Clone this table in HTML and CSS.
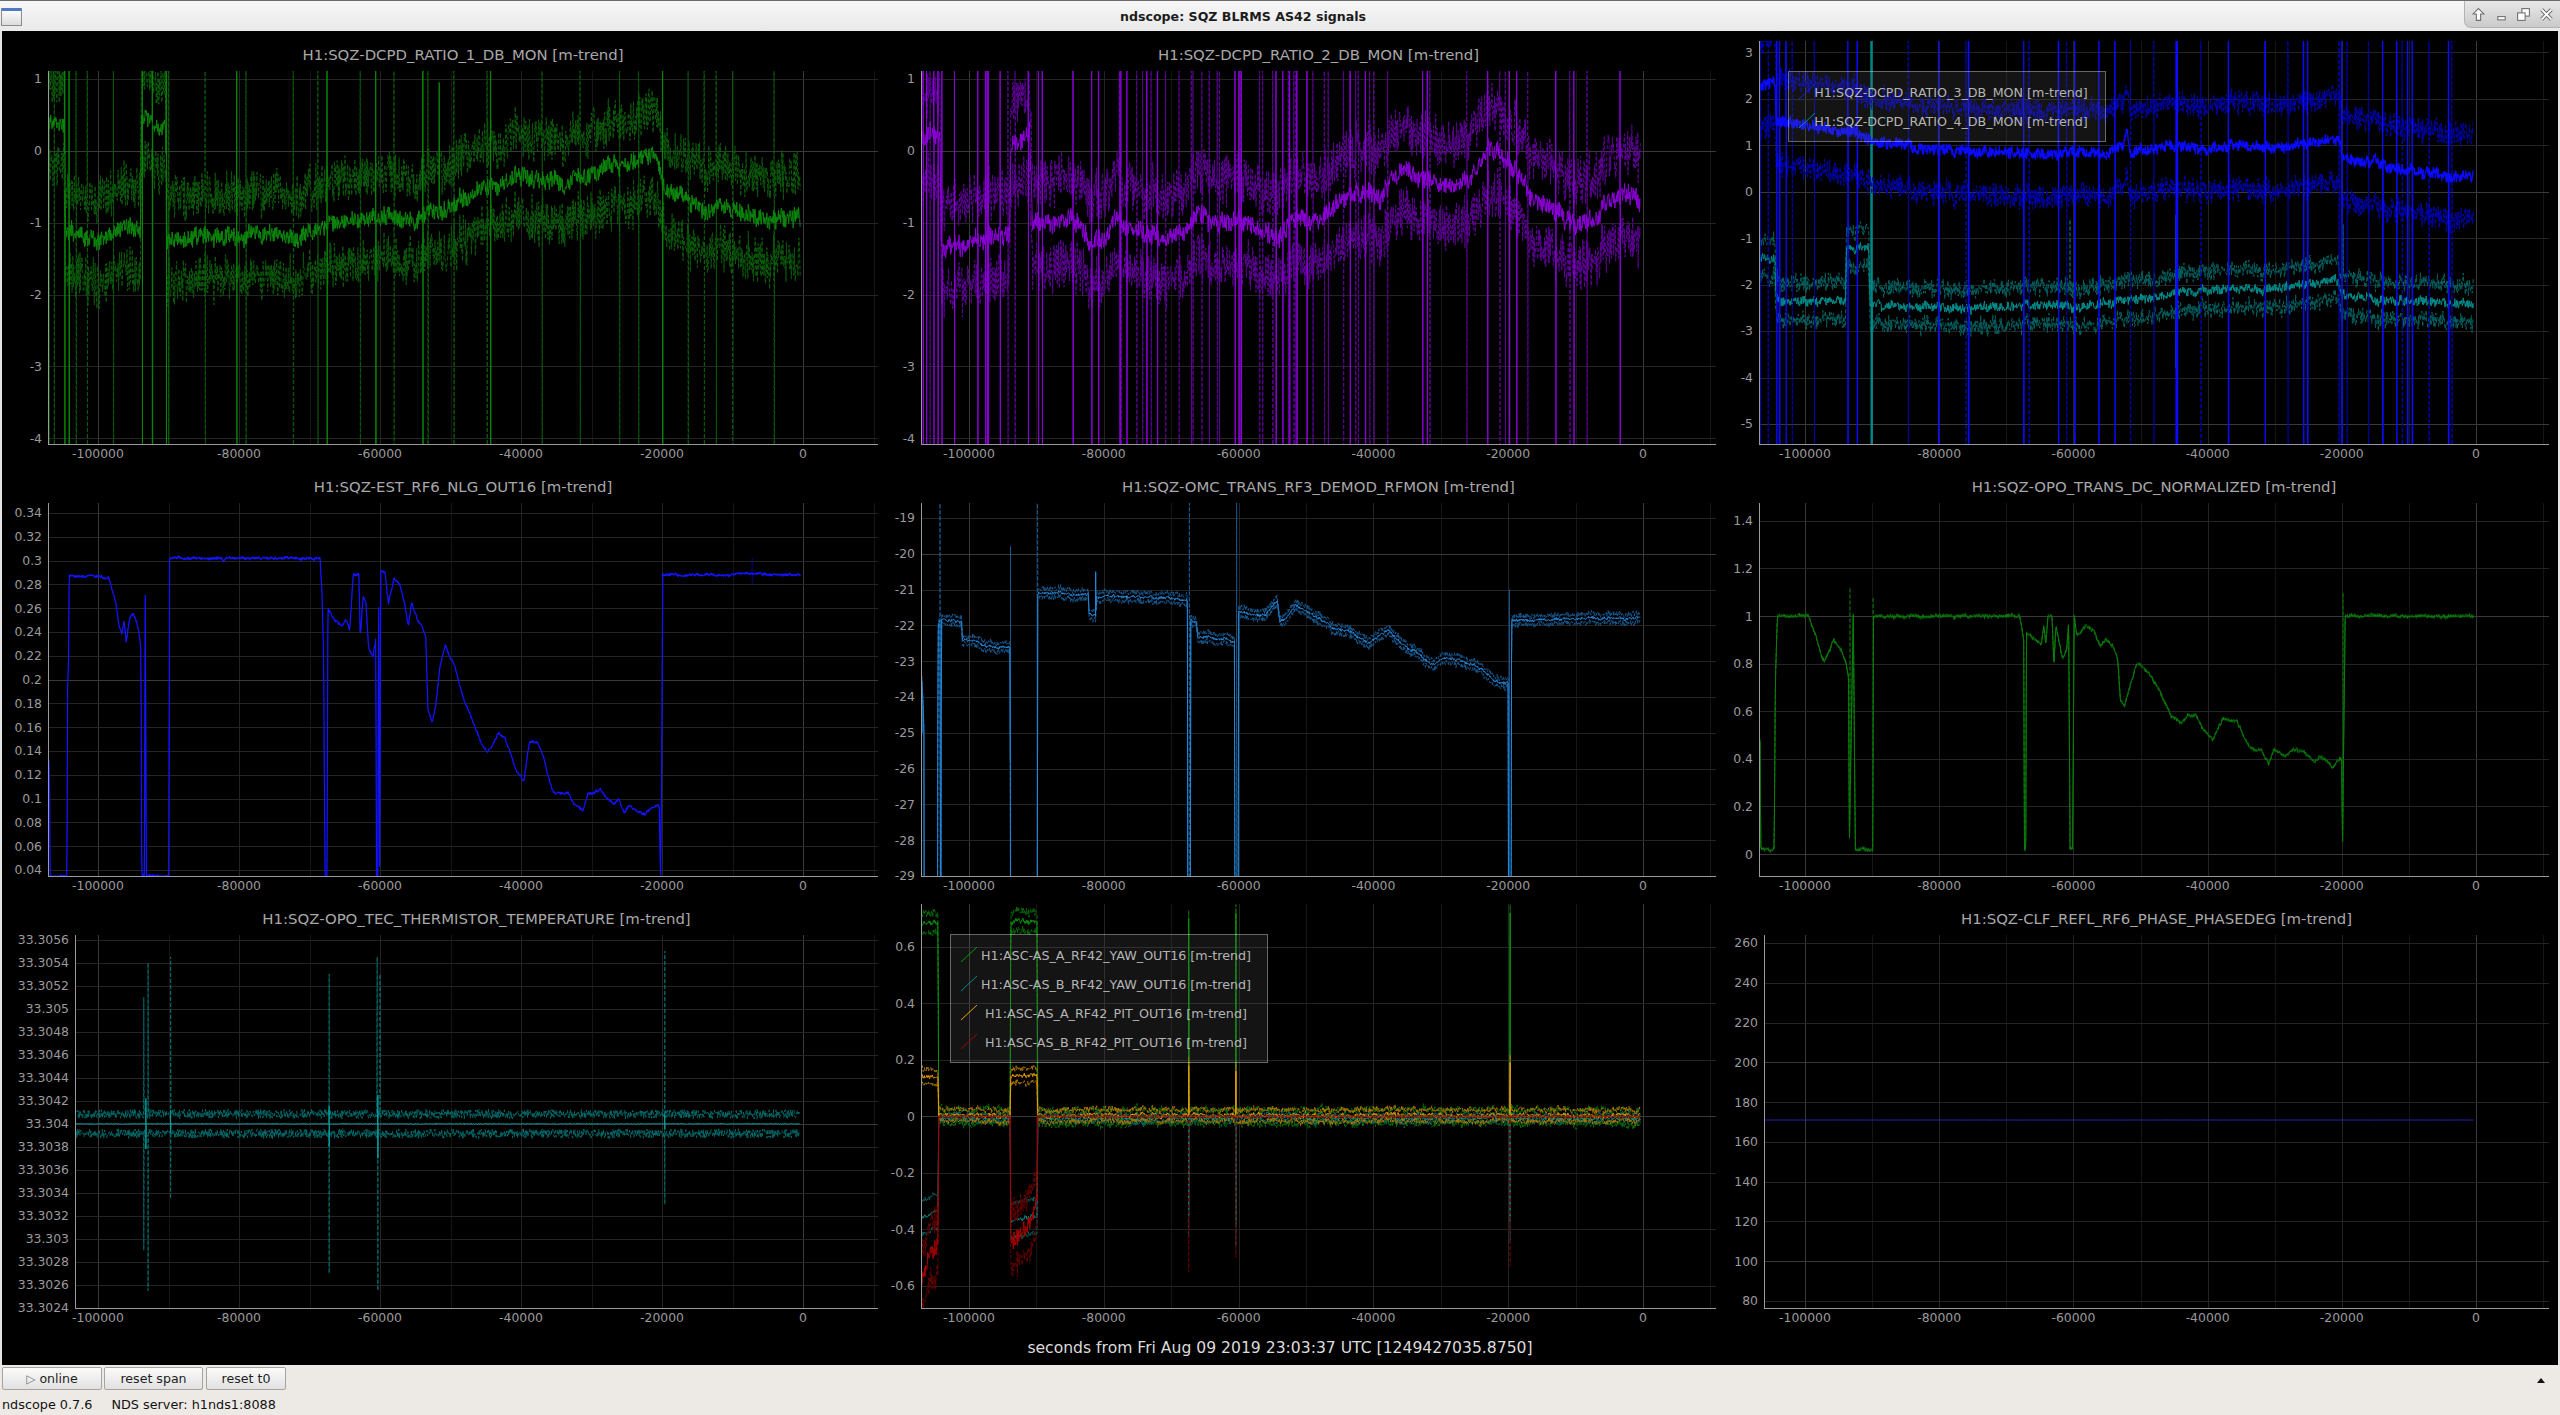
FILE: index.html
```html
<!DOCTYPE html>
<html lang="en">
<head>
<meta charset="utf-8">
<title>ndscope: SQZ BLRMS AS42 signals</title>
<link rel="stylesheet" href="styles.css">
</head>
<body>
<div class="window">
  <header class="titlebar">
    <span class="app-icon"></span>
    <span class="win-title">ndscope: SQZ BLRMS AS42 signals</span>
    <span class="wm-buttons">
      <svg class="wm-icon" viewBox="0 0 14 14"><path class="wm-fill" d="M7 1.5 L12 6.5 L9 6.5 L9 12.5 L5 12.5 L5 6.5 L2 6.5 Z"/></svg>
      <svg class="wm-icon" viewBox="0 0 14 14"><rect class="wm-fill" x="3.5" y="9" width="7" height="3"/></svg>
      <svg class="wm-icon" viewBox="0 0 14 14"><rect class="wm-fill" x="5.5" y="1.5" width="7" height="7"/><rect class="wm-fill" x="1.5" y="5.5" width="7" height="7"/><rect class="wm-inner" x="3.5" y="7.5" width="3" height="3"/></svg>
      <svg class="wm-icon" viewBox="0 0 14 14"><path class="wm-out" d="M2.5 2.5 L11.5 11.5 M11.5 2.5 L2.5 11.5"/><path class="wm-in" d="M2.5 2.5 L11.5 11.5 M11.5 2.5 L2.5 11.5"/></svg>
    </span>
  </header>
  <main class="scope">
    <section class="plots">
      <div class="panel" id="p11"></div>
      <div class="panel" id="p12"></div>
      <div class="panel" id="p13"></div>
      <div class="panel" id="p21"></div>
      <div class="panel" id="p22"></div>
      <div class="panel" id="p23"></div>
      <div class="panel" id="p31"></div>
      <div class="panel" id="p32"></div>
      <div class="panel" id="p33"></div>
    </section>
    <div class="time-label">seconds from Fri Aug 09 2019 23:03:37 UTC [1249427035.8750]</div>
  </main>
  <nav class="controls">
    <button class="btn btn-online"><span class="play">&#9655;</span> online</button>
    <button class="btn btn-span">reset span</button>
    <button class="btn btn-t0">reset t0</button>
    <span class="expander"></span>
  </nav>
  <footer class="status"><span class="version">ndscope 0.7.6</span><span class="server">NDS server: h1nds1:8088</span></footer>
</div>
<script src="script.js"></script>
</body>
</html>
```

FILE: styles.css
```css
html, body {
  margin: 0;
  padding: 0;
}
body {
  width: 2560px;
  height: 1415px;
  overflow: hidden;
  background: #edeae5;
  font-family: "DejaVu Sans", "Liberation Sans", sans-serif;
}
.window {
  display: flex;
  flex-direction: column;
  height: 1415px;
}
.titlebar {
  height: 30px;
  border-top: 1px solid #6b6b6b;
  background: linear-gradient(#f7f7f7, #e9e9e9);
  display: flex;
  align-items: center;
}
.app-icon {
  width: 19px;
  height: 14px;
  margin-left: 1px;
  margin-top: 1px;
  border: 1px solid #8c8c8c;
  border-top: 3px solid #4d79c6;
  border-radius: 1px;
  background: linear-gradient(#fbfbfb, #dcdcdc);
}
.win-title {
  flex: 1;
  text-align: center;
  font-weight: bold;
  font-size: 12.6px;
  color: #1c1c1c;
}
.wm-buttons {
  align-self: flex-start;
  width: 91px;
  height: 26px;
  display: flex;
  align-items: center;
  justify-content: space-around;
  padding: 0 2px;
  background: linear-gradient(#e8e8e8, #cacaca);
  border-left: 1px solid #b3b3b3;
  border-bottom: 1px solid #b3b3b3;
  border-bottom-left-radius: 7px;
}
.wm-icon {
  width: 15px;
  height: 15px;
}
.wm-fill {
  fill: #ffffff;
  stroke: #6e6e6e;
  stroke-width: 1;
}
.wm-inner {
  fill: #ffffff;
  stroke: none;
}
.wm-out {
  stroke: #6e6e6e;
  stroke-width: 3.6;
  fill: none;
}
.wm-in {
  stroke: #ffffff;
  stroke-width: 1.8;
  fill: none;
}
.scope {
  height: 1334px;
  background: #000;
  border-left: 2px solid #e4e4e4;
  border-right: 2px solid #e4e4e4;
  display: flex;
  flex-direction: column;
}
.plots {
  display: grid;
  grid-template-columns: 878px 838px 840px;
  grid-template-rows: 432px 432px 432px;
}
.panel {
  overflow: hidden;
}
.plot {
  display: block;
}
.time-label {
  height: 34px;
  padding-top: 4px;
  display: flex;
  align-items: center;
  justify-content: center;
  color: #dcdcdc;
  font-size: 15.6px;
}
.controls {
  height: 26px;
  padding: 2px 2px 0 2px;
  display: flex;
  align-items: flex-start;
  gap: 2px;
}
.btn {
  height: 23px;
  padding: 0;
  font-family: "DejaVu Sans", sans-serif;
  font-size: 12.6px;
  color: #1e1e1e;
  background: linear-gradient(#fbfbfb, #e1e1e1);
  border: 1px solid #a4a4a4;
  border-radius: 2px;
}
.btn-online { width: 100px; }
.btn-span { width: 99px; }
.btn-t0 { width: 80px; margin-left: 1px; }
.play {
  color: #777;
  font-size: 12px;
}
.expander {
  margin-left: auto;
  margin-right: 13px;
  margin-top: 11px;
  width: 0;
  height: 0;
  border-left: 4px solid transparent;
  border-right: 4px solid transparent;
  border-bottom: 5px solid #111;
}
.status {
  height: 22px;
  line-height: 24px;
  padding-left: 2px;
  font-size: 12.8px;
  color: #111;
  white-space: nowrap;
  overflow: hidden;
}
.version {
  margin-right: 19px;
}

/* plot internals */
.tick {
  font-family: "DejaVu Sans", sans-serif;
  font-size: 12.4px;
  fill: #9a9a9a;
}
.ptitle {
  font-family: "DejaVu Sans", sans-serif;
  font-size: 14.9px;
  fill: #a8a8a8;
}
.legend-text {
  font-family: "DejaVu Sans", sans-serif;
  font-size: 12.7px;
  fill: #b4b4b4;
}
.legend-box {
  fill: rgba(100, 100, 100, 0.2);
  stroke: rgba(255, 255, 255, 0.38);
  stroke-width: 1;
}
.axis {
  stroke: #9a9a9a;
  stroke-width: 1;
  shape-rendering: crispEdges;
}
.g-major { stroke: #3a3a3a; stroke-width: 1; shape-rendering: crispEdges; }
.g-mid { stroke: #242424; stroke-width: 1; shape-rendering: crispEdges; }
.g-minor { stroke: #151515; stroke-width: 1; shape-rendering: crispEdges; }
.trace {
  fill: none;
  stroke-linejoin: round;
}
.dashed {
  stroke-dasharray: 4 2;
}
```

FILE: script.js
```js
(function () {
  var NS = 'http://www.w3.org/2000/svg';

  function rng(seed) {
    return function () {
      seed |= 0; seed = seed + 0x6D2B79F5 | 0;
      var t = Math.imul(seed ^ seed >>> 15, 1 | seed);
      t = t + Math.imul(t ^ t >>> 7, 61 | t) ^ t;
      return ((t ^ t >>> 14) >>> 0) / 4294967296;
    };
  }

  var COLS = [
    { x0: 801, sc: 7.05, right: 876 },
    { x0: 763, sc: 6.74, right: 836 },
    { x0: 758, sc: 6.71, right: 831 }
  ];

  function interp(k, t) {
    if (t <= k[0][0]) return k[0][1];
    for (var i = 1; i < k.length; i++) {
      if (t <= k[i][0]) {
        var a = k[i - 1], b = k[i];
        return a[1] + (b[1] - a[1]) * (t - a[0]) / (b[0] - a[0]);
      }
    }
    return k[k.length - 1][1];
  }

  function series(R, knots, o) {
    var n = o.n || 1700;
    var t0 = o.t0 != null ? o.t0 : -107.2;
    var t1 = o.t1 != null ? o.t1 : -0.4;
    var mean = [], max = [], min = [], w = 0;
    for (var i = 0; i < n; i++) {
      var t = t0 + (t1 - t0) * i / (n - 1);
      w = w * 0.8 + (R() - 0.5) * (o.walk || 0);
      var nz = o.noiseK ? interp(o.noiseK, t) : (o.noise || 0);
      var m = interp(knots, t) + w + (R() - 0.5) * 2 * nz;
      mean.push([t, m]);
      var b = o.bandK ? interp(o.bandK, t) : (o.band || 0);
      var bn = o.bandNoiseK ? interp(o.bandNoiseK, t) : (o.bandNoise || 0);
      max.push([t, m + b + (R() - 0.5) * 2 * bn]);
      min.push([t, m - b + (R() - 0.5) * 2 * bn]);
    }
    return { mean: mean, max: max, min: min };
  }

  function spike(pts, t, vals) {
    var i = 0;
    while (i < pts.length && pts[i][0] < t) i++;
    var ins = vals.map(function (v) { return [t, v]; });
    Array.prototype.splice.apply(pts, [i, 0].concat(ins));
  }

  function mk(tag, attrs, parent) {
    var e = document.createElementNS(NS, tag);
    for (var k in attrs) e.setAttribute(k, attrs[k]);
    if (parent) parent.appendChild(e);
    return e;
  }

  function ticks(a, b, s) {
    var out = [];
    var n = Math.round((b - a) / s);
    for (var i = 0; i <= n; i++) out.push(Math.round((a + i * s) * 1e6) / 1e6);
    return out;
  }

  function fmt(v) {
    if (Math.abs(v) < 1e-12) return '0';
    return String(parseFloat(v.toFixed(4)));
  }

  function pathD(pts, X, Y) {
    var s = '';
    for (var i = 0; i < pts.length; i++) {
      var y = Y(pts[i][1]);
      if (y < -2000) y = -2000; if (y > 3000) y = 3000;
      s += (i ? 'L' : 'M') + X(pts[i][0]).toFixed(1) + ' ' + y.toFixed(1);
    }
    return s;
  }

  function build(id, cfg) {
    var host = document.getElementById(id);
    var W = host.clientWidth, H = host.clientHeight;
    var col = COLS[cfg.col];
    var L = cfg.left, Rt = col.right, T = cfg.top, B = 413;
    var X = function (t) { return col.x0 + t * col.sc; };
    var Y = function (v) { return T + (cfg.ymax - v) / (cfg.ymax - cfg.ymin) * (B - T); };
    var svg = mk('svg', { width: W, height: H, viewBox: '0 0 ' + W + ' ' + H, 'class': 'plot' }, host);
    var defs = mk('defs', {}, svg);
    var cp = mk('clipPath', { id: id + '-clip' }, defs);
    mk('rect', { x: L + 1, y: T, width: Rt - L - 1, height: B - T }, cp);

    var g = mk('g', {}, svg);
    for (var t = -110; t <= 10; t += 10) {
      var x = Math.round(X(t)) + 0.5;
      if (x < L + 2 || x > Rt) continue;
      var cls = (t === 0 || t === -100) ? 'g-major' : (t % 20 === 0 ? 'g-mid' : 'g-minor');
      mk('line', { x1: x, x2: x, y1: T, y2: B, 'class': cls }, g);
    }
    cfg.yticks.forEach(function (v) {
      var y = Math.round(Y(v)) + 0.5;
      var major = cfg.major.some(function (m) { return Math.abs(m - v) < 1e-9; });
      mk('line', { x1: L, x2: Rt, y1: y, y2: y, 'class': major ? 'g-major' : 'g-mid' }, g);
    });

    var tg = mk('g', { 'clip-path': 'url(#' + id + '-clip)' }, svg);
    var R = rng(cfg.seed || 1);
    cfg.traces(R).forEach(function (tr) {
      mk('path', {
        d: pathD(tr.pts, X, Y),
        stroke: tr.color,
        'stroke-width': tr.w || 1,
        'class': 'trace' + (tr.dash ? ' dashed' : '')
      }, tg);
    });

    mk('line', { x1: L + 0.5, x2: L + 0.5, y1: T, y2: B + 1, 'class': 'axis' }, svg);
    mk('line', { x1: L, x2: Rt, y1: B + 0.5, y2: B + 0.5, 'class': 'axis' }, svg);

    cfg.yticks.forEach(function (v) {
      var tx = mk('text', { x: L - 6, y: (Y(v) + 4.4).toFixed(1), 'class': 'tick', 'text-anchor': 'end' }, svg);
      tx.textContent = fmt(v);
    });
    for (var tt = -100; tt <= 0; tt += 20) {
      var xx = X(tt);
      if (xx < L - 30) continue;
      var tx2 = mk('text', { x: xx.toFixed(1), y: B + 14, 'class': 'tick', 'text-anchor': 'middle' }, svg);
      tx2.textContent = tt === 0 ? '0' : String(tt * 1000);
    }

    if (cfg.title) {
      var ti = mk('text', { x: ((L + Rt) / 2).toFixed(1), y: 29, 'class': 'ptitle', 'text-anchor': 'middle' }, svg);
      ti.textContent = cfg.title;
    }

    if (cfg.legend) {
      var lg = cfg.legend;
      mk('rect', { x: 70.5, y: lg.y + 0.5, width: 317, height: lg.h, 'class': 'legend-box' }, svg);
      lg.items.forEach(function (it, i) {
        var cy = lg.y + 21 + i * 29;
        mk('line', { x1: 81, y1: cy + 7, x2: 97, y2: cy - 8, stroke: it.color, 'stroke-width': 1 }, svg);
        var lt = mk('text', { x: lg.cx, y: cy + 4.5, 'class': 'legend-text', 'text-anchor': 'middle' }, svg);
        lt.textContent = it.label;
      });
    }
  }

  /* ---------------- data shapes ---------------- */

  var K11 = [[-107.2, 0.4], [-104.8, 0.35], [-104.6, -1.1], [-100, -1.2], [-97, -1.05], [-94, -1.1], [-93.8, 0.45], [-91, 0.3], [-90.4, 0.3], [-90.2, -1.25], [-85, -1.2], [-80, -1.2], [-75, -1.15], [-72, -1.25], [-68, -1.05], [-64, -0.95], [-61, -0.9], [-55, -1.0], [-53, -0.85], [-50, -0.8], [-46, -0.55], [-44, -0.5], [-40, -0.35], [-35, -0.45], [-30, -0.35], [-27, -0.2], [-24, -0.15], [-21, -0.05], [-19.5, -0.5], [-15, -0.8], [-10, -0.8], [-5, -0.95], [-0.4, -0.9]];

  var K12 = [[-107.2, 0.2], [-106, 0.3], [-104.3, 0.25], [-104.1, -1.35], [-100, -1.3], [-97, -1.15], [-94, -1.2], [-93.8, 0.1], [-91, 0.25], [-90.6, -1.0], [-87, -1.0], [-84, -0.9], [-82, -1.3], [-80, -1.2], [-78, -0.9], [-75, -1.15], [-70, -1.2], [-66, -0.9], [-63, -1.0], [-60, -0.95], [-58, -1.05], [-54, -1.2], [-52, -0.9], [-48, -1.0], [-45, -0.7], [-42, -0.6], [-39, -0.6], [-36, -0.3], [-32, -0.4], [-28, -0.5], [-25, -0.3], [-23, 0.0], [-20, -0.1], [-17, -0.6], [-14, -0.8], [-10, -1.05], [-7, -0.9], [-3, -0.6], [-0.4, -0.7]];

  var K13a = [[-107.2, 2.3], [-104.5, 2.35], [-104.3, 1.5], [-100, 1.45], [-96, 1.3], [-93, 1.3], [-90, 1.1], [-85, 1.0], [-80, 0.9], [-75, 0.85], [-70, 0.85], [-65, 0.8], [-60, 0.85], [-55, 0.8], [-52.5, 1.0], [-52, 1.35], [-51.5, 0.85], [-48, 0.9], [-45, 1.0], [-40, 0.9], [-35, 1.0], [-30, 0.95], [-25, 1.0], [-22, 1.1], [-20.2, 1.1], [-20, 0.75], [-17, 0.6], [-15, 0.7], [-13, 0.5], [-10, 0.45], [-5, 0.35], [-0.4, 0.3]];

  var K13b = [[-107.2, -1.4], [-104.5, -1.5], [-104.3, -2.35], [-94, -2.35], [-93.8, -1.15], [-90.5, -1.25], [-90.3, -2.45], [-80, -2.5], [-70, -2.5], [-65, -2.45], [-60, -2.5], [-55, -2.4], [-50, -2.3], [-45, -2.2], [-40, -2.1], [-30, -2.1], [-25, -2.0], [-21, -1.9], [-20, -2.2], [-15, -2.3], [-10, -2.35], [-5, -2.35], [-0.4, -2.45]];

  var K21 = [[-107.2, 0.137], [-106.9, 0.13], [-106.8, 0.035], [-104.4, 0.035], [-104.3, 0.21], [-104.2, 0.2], [-104.1, 0.287], [-99.5, 0.287], [-99, 0.285], [-98.5, 0.286], [-98.2, 0.28], [-97.5, 0.265], [-97, 0.245], [-96.6, 0.238], [-96.3, 0.25], [-96, 0.232], [-95.5, 0.252], [-95, 0.255], [-94.5, 0.248], [-94.1, 0.236], [-93.9, 0.225], [-93.8, 0.035], [-93.4, 0.035], [-93.3, 0.29], [-93.15, 0.035], [-89.95, 0.035], [-89.85, 0.302], [-82.4, 0.302], [-82.2, 0.3], [-81.8, 0.302], [-69.8, 0.302], [-69.4, 0.3], [-69, 0.302], [-68.5, 0.302], [-68.2, 0.27], [-68, 0.22], [-67.8, 0.035], [-67.5, 0.035], [-67.4, 0.26], [-66.5, 0.25], [-65.5, 0.245], [-64.8, 0.25], [-64.3, 0.242], [-63.8, 0.288], [-63, 0.288], [-62.8, 0.235], [-62.4, 0.27], [-62, 0.265], [-61.6, 0.225], [-61, 0.22], [-60.6, 0.235], [-60.5, 0.035], [-60.3, 0.035], [-60.2, 0.295], [-60.05, 0.035], [-59.9, 0.29], [-59.3, 0.29], [-58.8, 0.265], [-58, 0.285], [-57.2, 0.28], [-56.5, 0.265], [-56, 0.245], [-55.5, 0.265], [-54.7, 0.25], [-54, 0.245], [-53.5, 0.235], [-53.2, 0.175], [-52.6, 0.165], [-52.1, 0.178], [-51.5, 0.21], [-50.7, 0.23], [-50.2, 0.22], [-49.6, 0.215], [-48.9, 0.2], [-48.2, 0.185], [-47.5, 0.175], [-46.5, 0.16], [-45.5, 0.145], [-44.8, 0.14], [-44, 0.145], [-43.2, 0.155], [-42.3, 0.152], [-41.6, 0.14], [-40.8, 0.125], [-39.6, 0.115], [-38.8, 0.148], [-37.6, 0.147], [-36.8, 0.135], [-36.2, 0.12], [-35.4, 0.105], [-34.5, 0.104], [-33.3, 0.105], [-32.5, 0.095], [-31.2, 0.09], [-30.5, 0.104], [-29.7, 0.105], [-28.8, 0.108], [-27.8, 0.1], [-26.8, 0.095], [-26.2, 0.1], [-25.4, 0.088], [-24.5, 0.095], [-23.6, 0.09], [-22.5, 0.087], [-21.5, 0.092], [-20.4, 0.094], [-20.2, 0.035], [-20.05, 0.12], [-19.9, 0.288], [-10, 0.288], [-9, 0.289], [-0.4, 0.288]];

  var K22 = [[-107.2, -22.8], [-106.7, -24.6], [-106.6, -35], [-104.7, -35], [-104.6, -22.0], [-104.3, -21.8], [-104.2, -35], [-104.1, -21.85], [-101.1, -21.9], [-101.0, -22.4], [-99, -22.45], [-97.5, -22.6], [-96, -22.6], [-93.9, -22.65], [-93.8, -35], [-89.9, -35], [-89.8, -21.1], [-86, -21.1], [-84, -21.15], [-82.3, -21.15], [-82.2, -21.7], [-81.2, -21.7], [-81.1, -21.2], [-75, -21.2], [-70, -21.25], [-67.6, -21.25], [-67.5, -35], [-67.2, -35], [-67.1, -21.85], [-66.3, -21.9], [-66, -22.35], [-64.5, -22.3], [-63.5, -22.4], [-62, -22.35], [-61, -22.45], [-60.6, -22.45], [-60.5, -35], [-60.1, -35], [-60.0, -21.6], [-58, -21.7], [-56, -21.7], [-54.3, -21.3], [-53.8, -21.9], [-53, -21.8], [-51.6, -21.45], [-50, -21.6], [-48, -21.8], [-45.8, -22.1], [-43, -22.2], [-40.8, -22.5], [-39.8, -22.4], [-37.9, -22.1], [-36, -22.5], [-33.3, -22.8], [-31.2, -23.1], [-29, -22.9], [-26.6, -23.0], [-24, -23.2], [-21.7, -23.6], [-20.0, -23.6], [-19.9, -35], [-19.6, -35], [-19.5, -21.85], [-15, -21.85], [-10, -21.8], [-5, -21.8], [-0.4, -21.8]];

  var K23 = [[-107.2, 0.5], [-106.7, 0.48], [-106.6, 0.02], [-104.6, 0.02], [-104.4, 0.75], [-104.1, 1.0], [-99.5, 1.0], [-98.5, 0.93], [-97.5, 0.83], [-97.1, 0.81], [-95.7, 0.9], [-94.7, 0.86], [-93.9, 0.8], [-93.5, 0.75], [-93.4, 0.02], [-92.8, 1.02], [-92.5, 0.02], [-89.9, 0.02], [-89.8, 1.0], [-68, 1.0], [-67.4, 0.9], [-67.3, 0.02], [-67.1, 0.02], [-67.0, 0.93], [-65.6, 0.9], [-64.8, 0.88], [-64.4, 0.95], [-64.1, 0.88], [-63.8, 1.0], [-63.2, 1.0], [-62.9, 0.8], [-62.6, 0.96], [-61.6, 0.82], [-61.0, 0.86], [-60.7, 0.98], [-60.5, 0.02], [-60.1, 0.02], [-59.9, 1.0], [-59.5, 0.92], [-58.1, 0.96], [-56.9, 0.94], [-56, 0.87], [-55.2, 0.9], [-54, 0.87], [-53.4, 0.82], [-53, 0.65], [-52.4, 0.62], [-51.6, 0.7], [-50.6, 0.8], [-49.8, 0.79], [-48.6, 0.75], [-47.4, 0.7], [-46.6, 0.65], [-45.4, 0.58], [-44, 0.55], [-43, 0.58], [-41.8, 0.58], [-40.6, 0.52], [-39.2, 0.48], [-37.7, 0.57], [-35.7, 0.56], [-34.7, 0.5], [-33.7, 0.44], [-32.1, 0.44], [-30.9, 0.38], [-30.1, 0.44], [-28.5, 0.41], [-27.3, 0.44], [-25.7, 0.43], [-24.1, 0.39], [-23.3, 0.41], [-21.3, 0.37], [-20.5, 0.4], [-20.0, 0.4], [-19.9, 0.02], [-19.5, 1.0], [-0.4, 1.0]];

  function blockK(a, b) {
    return [[-107.2, a], [-104.6, a], [-104.5, b], [-93.9, b], [-93.8, a], [-89.9, a], [-89.8, b], [0, b]];
  }

  var panels = {
    p11: {
      col: 0, left: 46, top: 40, ymin: -4.08, ymax: 1.11, seed: 11,
      yticks: ticks(-4, 1, 1), major: [0],
      title: 'H1:SQZ-DCPD_RATIO_1_DB_MON [m-trend]',
      traces: function (R) {
        var s = series(R, K11, { noise: 0.11, walk: 0.08, band: 0.58, bandNoise: 0.26 });
        [-107.0, -104.7, -104.1, -93.7, -92.3, -90.3, -80.3, -67.5, -60.6, -53.9, -44.3, -19.9].forEach(function (t) { spike(s.mean, t, [99, -99]); });
        spike(s.mean, -51.6, [0.95]);
        [-106.2, -103.1, -101.5, -97.8, -90.0, -84.8, -79, -72.3, -68.8, -62.8, -58, -53.2, -49.5, -44.8, -37, -31.6, -26, -23.3, -16.3, -14, -12.3, -10, -4.1].forEach(function (t) { spike(s.max, t, [99, -99]); });
        return [
          { pts: s.max, color: '#0a5c0a', dash: 1 },
          { pts: s.min, color: '#0a5c0a', dash: 1 },
          { pts: s.mean, color: '#0b870b' }
        ];
      }
    },
    p12: {
      col: 1, left: 41, top: 40, ymin: -4.08, ymax: 1.11, seed: 12,
      yticks: ticks(-4, 1, 1), major: [0],
      title: 'H1:SQZ-DCPD_RATIO_2_DB_MON [m-trend]',
      traces: function (R) {
        var s = series(R, K12, { noise: 0.12, walk: 0.08, band: 0.6, bandNoise: 0.28 });
        var G = rng(77);
        [-106.8, -106.3, -105.2, -104.6, -104.0].forEach(function (t) { spike(s.mean, t, [99, -99]); });
        for (var i = 0; i < 34; i++) spike(s.mean, -103 + G() * 102, [99, -99]);
        for (var j = 0; j < 40; j++) spike(s.max, -106.5 + G() * 105.5, [99, -99]);
        return [
          { pts: s.max, color: '#5f0098', dash: 1 },
          { pts: s.min, color: '#5f0098', dash: 1 },
          { pts: s.mean, color: '#8a00d6' }
        ];
      }
    },
    p13: {
      col: 2, left: 41, top: 10, ymin: -5.43, ymax: 3.24, seed: 13,
      yticks: ticks(-5, 3, 1), major: [0, -5],
      legend: { y: 40, h: 70, cx: 233, items: [
        { color: '#1a1aff', label: 'H1:SQZ-DCPD_RATIO_3_DB_MON [m-trend]' },
        { color: '#009090', label: 'H1:SQZ-DCPD_RATIO_4_DB_MON [m-trend]' }
      ] },
      traces: function (R) {
        var a = series(R, K13a, { noise: 0.11, walk: 0.06, band: 0.92, bandNoise: 0.2 });
        var b = series(R, K13b, { noise: 0.09, walk: 0.06, band: 0.4, bandNoise: 0.14 });
        [-106.7, -104.2, -103.8, -102.8, -93.6, -92.2, -80.1, -75.6, -67.4, -62.2, -59.8, -56.2, -53.8, -44.7, -44.5, -36.9, -31.4, -25.7, -25.1, -20, -13.9, -11.8, -10.2, -9.5, -4.1].forEach(function (t) { spike(a.mean, t, [99, -99]); });
        [-105.5, -101.9, -98.6, -84.6, -76, -66.6, -61, -51.5, -48, -41, -28, -20.4, -19.2, -16, -11, -7, -3.6].forEach(function (t) { spike(a.max, t, [99, -99]); });
        spike(b.mean, -90.15, [99, -99]);
        spike(b.mean, -90.0, [99, -99]);
        spike(b.mean, -44.7, [-0.5, -3.8]);
        spike(b.max, -60.5, [-0.6]);
        spike(b.max, -19.8, [-0.7]);
        return [
          { pts: b.max, color: '#006262', dash: 1 },
          { pts: b.min, color: '#006262', dash: 1 },
          { pts: b.mean, color: '#008c8c' },
          { pts: a.max, color: '#0000b4', dash: 1 },
          { pts: a.min, color: '#0000b4', dash: 1 },
          { pts: a.mean, color: '#0a0aff', w: 1.3 }
        ];
      }
    },
    p21: {
      col: 0, left: 46, top: 40, ymin: 0.035, ymax: 0.3484, seed: 21,
      yticks: ticks(0.04, 0.34, 0.02), major: [0.2],
      title: 'H1:SQZ-EST_RF6_NLG_OUT16 [m-trend]',
      traces: function (R) {
        var s = series(R, K21, { noise: 0.0009, walk: 0.0008 });
        spike(s.max, -89.95, [0.16]);
        spike(s.max, -7.2, [0.302, 0.28]);
        return [
          { pts: s.max, color: '#0000c8', dash: 1, w: 0.6 },
          { pts: s.mean, color: '#1414ff', w: 1.2 }
        ];
      }
    },
    p22: {
      col: 1, left: 41, top: 40, ymin: -29, ymax: -18.58, seed: 22,
      yticks: ticks(-29, -19, 1), major: [-20],
      title: 'H1:SQZ-OMC_TRANS_RF3_DEMOD_RFMON [m-trend]',
      traces: function (R) {
        var s = series(R, K22, { noise: 0.03, walk: 0.04, band: 0.12, bandNoise: 0.06 });
        spike(s.max, -104.3, [-17, -17]);
        spike(s.max, -93.85, [-19.8]);
        spike(s.max, -89.85, [-17]);
        spike(s.max, -67.3, [-17]);
        spike(s.max, -60.3, [-17]);
        spike(s.max, -19.8, [-21.0]);
        spike(s.mean, -81.2, [-20.5]);
        spike(s.min, -106.9, [-25.0]);
        return [
          { pts: s.max, color: '#16598f', dash: 1 },
          { pts: s.min, color: '#16598f', dash: 1 },
          { pts: s.mean, color: '#2388dc' }
        ];
      }
    },
    p23: {
      col: 2, left: 41, top: 40, ymin: -0.092, ymax: 1.475, seed: 23,
      yticks: ticks(0, 1.4, 0.2), major: [0, 1],
      title: 'H1:SQZ-OPO_TRANS_DC_NORMALIZED [m-trend]',
      traces: function (R) {
        var s = series(R, K23, { noise: 0.004, walk: 0.006, band: 0.004, bandNoise: 0.002 });
        spike(s.max, -93.3, [1.12]);
        spike(s.max, -89.85, [1.08]);
        spike(s.max, -19.8, [1.1]);
        return [
          { pts: s.max, color: '#066006', dash: 1 },
          { pts: s.min, color: '#066006', dash: 1 },
          { pts: s.mean, color: '#0a800a' }
        ];
      }
    },
    p31: {
      col: 0, left: 73, top: 40, ymin: 33.3024, ymax: 33.30564, seed: 31,
      yticks: ticks(33.3024, 33.3056, 0.0002), major: [33.304],
      title: 'H1:SQZ-OPO_TEC_THERMISTOR_TEMPERATURE [m-trend]',
      traces: function (R) {
        var s = series(R, [[-107.2, 33.304], [0, 33.304]], { t0: -103.4, t1: -0.5, noise: 0.000004, band: 0.000085, bandNoise: 0.00004 });
        spike(s.max, -93.5, [33.3051]); spike(s.max, -92.9, [33.3054]); spike(s.max, -89.7, [33.30545]);
        spike(s.max, -67.2, [33.3053]); spike(s.max, -60.4, [33.30545]); spike(s.max, -60.0, [33.3053]); spike(s.max, -19.6, [33.3055]);
        spike(s.min, -93.5, [33.3029]); spike(s.min, -92.9, [33.30255]); spike(s.min, -89.7, [33.30335]);
        spike(s.min, -67.2, [33.3027]); spike(s.min, -60.3, [33.30255]); spike(s.min, -19.6, [33.3033]);
        spike(s.mean, -93.2, [33.30422, 33.30378]); spike(s.mean, -89.7, [33.30412, 33.30392]);
        spike(s.mean, -67.2, [33.30415, 33.3038]); spike(s.mean, -60.3, [33.30425, 33.3037]); spike(s.mean, -19.6, [33.30408, 33.30395]);
        return [
          { pts: s.max, color: '#006a6a', dash: 1 },
          { pts: s.min, color: '#006a6a', dash: 1 },
          { pts: s.mean, color: '#00a0a0' }
        ];
      }
    },
    p32: {
      col: 1, left: 41, top: 9, ymin: -0.678, ymax: 0.752, seed: 32,
      yticks: ticks(-0.6, 0.6, 0.2), major: [0],
      legend: { y: 39, h: 128, cx: 236, items: [
        { color: '#0a9a0a', label: 'H1:ASC-AS_A_RF42_YAW_OUT16 [m-trend]' },
        { color: '#0a8a8a', label: 'H1:ASC-AS_B_RF42_YAW_OUT16 [m-trend]' },
        { color: '#f0a000', label: 'H1:ASC-AS_A_RF42_PIT_OUT16 [m-trend]' },
        { color: '#a00000', label: 'H1:ASC-AS_B_RF42_PIT_OUT16 [m-trend]' }
      ] },
      traces: function (R) {
        var gr = series(R, [[-107.2, 0.68], [-104.6, 0.69], [-104.5, 0.0], [-93.9, 0.0], [-93.8, 0.69], [-89.9, 0.69], [-89.8, 0.0], [0, 0.0]],
          { noise: 0.005, walk: 0.01, bandK: blockK(0.035, 0.024), bandNoise: 0.009 });
        var te = series(R, [[-107.2, -0.36], [-104.6, -0.33], [-104.5, -0.006], [-93.9, -0.006], [-93.8, -0.37], [-89.9, -0.35], [-89.8, -0.006], [0, -0.006]],
          { noise: 0.005, walk: 0.006, bandK: blockK(0.06, 0.012), bandNoise: 0.006 });
        var or = series(R, [[-107.2, 0.14], [-104.6, 0.14], [-104.5, 0.004], [-93.9, 0.004], [-93.8, 0.145], [-89.9, 0.145], [-89.8, 0.004], [0, 0.004]],
          { noise: 0.004, walk: 0.008, bandK: blockK(0.025, 0.02), bandNoise: 0.007 });
        var rd = series(R, [[-107.2, -0.6], [-106, -0.5], [-104.6, -0.45], [-104.5, 0], [-93.9, 0], [-93.8, -0.45], [-91, -0.38], [-89.9, -0.3], [-89.8, 0], [0, 0]],
          { noiseK: blockK(0.03, 0.001), bandK: blockK(0.1, 0.004), bandNoiseK: blockK(0.03, 0.002) });
        [[-67.4, 0.7], [-60.4, 0.72], [-19.7, 0.72]].forEach(function (p) { spike(gr.mean, p[0], [p[1]]); spike(gr.max, p[0], [p[1] + 0.03]); spike(gr.min, p[0], [-0.04]); });
        [[-67.4, -0.35], [-60.4, -0.38], [-19.7, -0.37]].forEach(function (p) { spike(te.mean, p[0], [p[1]]); spike(te.min, p[0], [p[1] - 0.08]); });
        [[-67.4, 0.18], [-60.4, 0.16], [-19.7, 0.19]].forEach(function (p) { spike(or.mean, p[0], [p[1]]); spike(or.max, p[0], [p[1] + 0.03]); });
        [[-67.4, -0.5], [-60.4, -0.45], [-19.7, -0.48]].forEach(function (p) { spike(rd.min, p[0], [p[1] - 0.05]); });
        return [
          { pts: gr.max, color: '#066e06', dash: 1 }, { pts: gr.min, color: '#066e06', dash: 1 }, { pts: gr.mean, color: '#0a920a' },
          { pts: te.max, color: '#066262', dash: 1 }, { pts: te.min, color: '#066262', dash: 1 }, { pts: te.mean, color: '#0a8a8a' },
          { pts: or.max, color: '#b07400', dash: 1 }, { pts: or.min, color: '#b07400', dash: 1 }, { pts: or.mean, color: '#e89a00' },
          { pts: rd.max, color: '#600000', dash: 1 }, { pts: rd.min, color: '#600000', dash: 1 }, { pts: rd.mean, color: '#a80000' }
        ];
      }
    },
    p33: {
      col: 2, left: 46, top: 40, ymin: 76.5, ymax: 264, seed: 33,
      yticks: ticks(80, 260, 20), major: [100, 200],
      title: 'H1:SQZ-CLF_REFL_RF6_PHASE_PHASEDEG [m-trend]',
      traces: function (R) {
        var s = series(R, [[-107.2, 171], [0, 171]], { n: 400, noise: 0.03 });
        return [{ pts: s.mean, color: '#2424b8' }];
      }
    }
  };

  Object.keys(panels).forEach(function (id) { build(id, panels[id]); });
})();
```
